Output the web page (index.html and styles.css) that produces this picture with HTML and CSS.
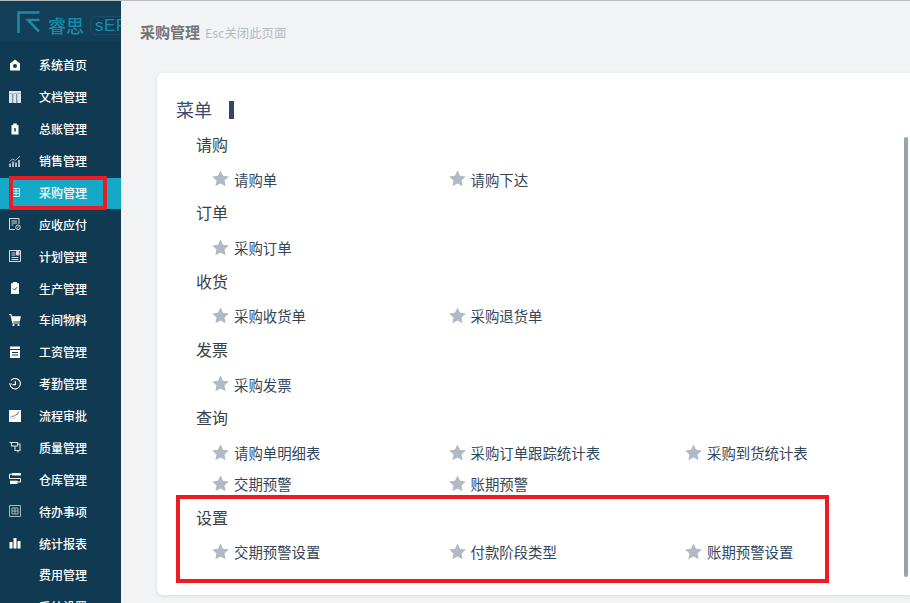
FILE: index.html
```html
<!DOCTYPE html>
<html lang="zh-CN">
<head>
<meta charset="utf-8">
<title>采购管理</title>
<link rel="stylesheet" href="styles.css">
</head>
<body>
<svg class="defs" width="0" height="0" aria-hidden="true">
  <symbol id="star" viewBox="0 0 16 16"><path d="M8 .4l2.400 5 5.400.7-4 3.800 1 5.500L8 12.800l-4.800 2.600 1-5.500-4-3.800 5.400-.7z"/></symbol>
</svg>
<div class="app">
  <aside class="sidebar">
    <div class="brand">
      <svg class="brand-logo" viewBox="0 0 23 22" fill="none" stroke="#1b8aa8" stroke-width="2.600">
        <path d="M1.500 22V1.500H22.500"/><path d="M22.500 9H11L22 20.500"/>
      </svg>
      <span class="brand-name">睿思</span>
      <span class="brand-tag">sERP</span>
    </div>
    <nav class="menu">
      <a class="menu-item"><svg class="ico" viewBox="0 0 12 12" fill="#fff"><path d="M6 .5L11 4.500V11.500H1V4.500z"/><circle cx="6" cy="7" r="2" fill="#0f3a52"/></svg><span>系统首页</span></a>
      <a class="menu-item"><svg class="ico" viewBox="0 0 12 12" fill="#dfe6ea"><path d="M0 0h12v12H0z"/><path d="M3.700 3v9M7.700 3v9" stroke="#6d8796" stroke-width="1.200"/><path d="M0 2.500h12" stroke="#8ea3af" stroke-width=".6"/></svg><span>文档管理</span></a>
      <a class="menu-item"><svg class="ico" viewBox="0 0 12 12" fill="#fff"><path d="M4.200 .5h3.600v1.500h1.700V11.500h-7V2h1.700z"/><path d="M5 5h2v3.500H5z" fill="#52707f"/></svg><span>总账管理</span></a>
      <a class="menu-item"><svg class="ico" viewBox="0 0 12 12" fill="#a9b8c2"><path d="M0 8.500h2V12H0zM3 6.500h2V12H3zM6 7.500h2V12H6zM9 5h2v7H9z"/><path d="M.5 6.500L3.500 4l3 1.500L11 1" fill="none" stroke="#a9b8c2"/></svg><span>销售管理</span></a>
      <a class="menu-item is-active"><svg class="ico" viewBox="0 0 12 12" fill="none" stroke="#cdeaf2"><path d="M1.500 2.500h9v8h-9zM1.500 5h9M1.500 7.500h9M7 2.500v8"/></svg><span>采购管理</span></a>
      <a class="menu-item"><svg class="ico" viewBox="0 0 12 12" fill="none" stroke="#d7dfe4"><path d="M10 6V.5H.5v11H6M2.500 3h5.500M2.500 5h5.500M2.500 7h2"/><circle cx="9" cy="9.300" r="2.300"/><path d="M9.800 8.500L8.300 10"/></svg><span>应收应付</span></a>
      <a class="menu-item"><svg class="ico" viewBox="0 0 12 12" fill="none" stroke="#d7dfe4"><path d="M.5.500h11v11H.5zM2.500 3h4M2.500 5h4M2.500 7.500h7M2.500 9.500h7"/><path d="M7.500 1.500h2.500v3.500H7.500z" fill="#d7dfe4"/></svg><span>计划管理</span></a>
      <a class="menu-item"><svg class="ico" viewBox="0 0 12 12" fill="#fff"><path d="M4 0h4v1.200h2V12H2V1.200h2z"/><path d="M4 6.500l1.500 1.500L8 5.300" fill="none" stroke="#0f3a52"/></svg><span>生产管理</span></a>
      <a class="menu-item"><svg class="ico" viewBox="0 0 12 12" fill="#fff"><path d="M0 0h2.200l1 2.300H12L10.700 7.500H4.300L4.500 8.500h6.200v1H3.300L1.500 1H0z"/><circle cx="4.500" cy="11" r="1.100"/><circle cx="9.500" cy="11" r="1.100"/></svg><span>车间物料</span></a>
      <a class="menu-item"><svg class="ico" viewBox="0 0 12 12" fill="#fff"><path d="M1 .5h10v2.500H1zM1 4h10v8H1z"/><path d="M3 6.500h6M3 9h6" stroke="#0f3a52"/></svg><span>工资管理</span></a>
      <a class="menu-item"><svg class="ico" viewBox="0 0 12 12" fill="none" stroke="#fff"><path d="M2 2.500A5.200 5.200 0 1 1 1 6.500" stroke-width="1.100"/><path d="M6.300 3v3.700H3.500M0 6h3" stroke-width="1.200"/></svg><span>考勤管理</span></a>
      <a class="menu-item"><svg class="ico" viewBox="0 0 12 12"><path d="M0 0h12v12H0z" fill="#fff"/><path d="M1 6.500l5-1.500 5-4.500-2 4-5 2.500z" fill="#8a979e"/><path d="M1 8h6" stroke="#c9ced1"/></svg><span>流程审批</span></a>
      <a class="menu-item"><svg class="ico" viewBox="0 0 12 12" fill="none" stroke="#d7dfe4" stroke-width="1.100"><path d="M.5 1.500h8v3.500h-6V1.500M6 5.500v4h5V3H8.500M9 9.500v2"/></svg><span>质量管理</span></a>
      <a class="menu-item"><svg class="ico" viewBox="0 0 12 12" fill="#fff"><path d="M3 0h9v2.500H3z"/><path d="M3 1.200H.5v4.300h11V9H8" fill="none" stroke="#fff"/><path d="M1 7.700h7.500V11H1z"/></svg><span>仓库管理</span></a>
      <a class="menu-item"><svg class="ico" viewBox="0 0 12 12" fill="none" stroke="#a9b8c2"><path d="M.5.500h11v11H.5zM3 3h6v6H3zM3 6h6M6 3v6"/></svg><span>待办事项</span></a>
      <a class="menu-item"><svg class="ico" viewBox="0 0 12 12" fill="#fff"><path d="M.5 5h3v6.500h-3zM4.500 1h3v10.500h-3zM8.500 4h3v7.500h-3z"/></svg><span>统计报表</span></a>
      <a class="menu-item"><span class="ico"></span><span>费用管理</span></a>
      <a class="menu-item"><span class="ico"></span><span>系统设置</span></a>
    </nav>
  </aside>
  <main class="content">
    <header class="page-head">
      <span class="page-title">采购管理</span>
      <span class="page-hint">Esc关闭此页面</span>
    </header>
    <section class="card">
      <div class="card-title"><span>菜单</span><i class="title-bar"></i></div>

      <div class="group">
        <h3 class="group-name">请购</h3>
        <ul class="links">
          <li><svg class="star"><use href="#star"/></svg>请购单</li>
          <li><svg class="star"><use href="#star"/></svg>请购下达</li>
        </ul>
      </div>
      <div class="group">
        <h3 class="group-name">订单</h3>
        <ul class="links">
          <li><svg class="star"><use href="#star"/></svg>采购订单</li>
        </ul>
      </div>
      <div class="group">
        <h3 class="group-name">收货</h3>
        <ul class="links">
          <li><svg class="star"><use href="#star"/></svg>采购收货单</li>
          <li><svg class="star"><use href="#star"/></svg>采购退货单</li>
        </ul>
      </div>
      <div class="group">
        <h3 class="group-name">发票</h3>
        <ul class="links">
          <li><svg class="star"><use href="#star"/></svg>采购发票</li>
        </ul>
      </div>
      <div class="group">
        <h3 class="group-name">查询</h3>
        <ul class="links">
          <li><svg class="star"><use href="#star"/></svg>请购单明细表</li>
          <li><svg class="star"><use href="#star"/></svg>采购订单跟踪统计表</li>
          <li><svg class="star"><use href="#star"/></svg>采购到货统计表</li>
          <li><svg class="star"><use href="#star"/></svg>交期预警</li>
          <li><svg class="star"><use href="#star"/></svg>账期预警</li>
        </ul>
      </div>
      <div class="group">
        <h3 class="group-name">设置</h3>
        <ul class="links">
          <li><svg class="star"><use href="#star"/></svg>交期预警设置</li>
          <li><svg class="star"><use href="#star"/></svg>付款阶段类型</li>
          <li><svg class="star"><use href="#star"/></svg>账期预警设置</li>
        </ul>
      </div>
      <div class="scrollbar"></div>
    </section>
  </main>
</div>
<div class="mark mark-menu"></div>
<div class="mark mark-settings"></div>
</body>
</html>
```
FILE: styles.css
```css
* { box-sizing: border-box; }
html, body { margin: 0; height: 100%; overflow: hidden; }
body {
  font-family: "Noto Sans CJK SC", "Liberation Sans", sans-serif;
  background: #f1f3f5;
  border-top: 1px solid #b9bcbe;
}
.defs { position: absolute; }
.app { display: flex; height: 602px; overflow: hidden; }

.sidebar {
  width: 121px;
  flex: none;
  background: #0f3a52;
  overflow: hidden;
  color: #fff;
}
.brand {
  height: 40px;
  display: flex;
  align-items: flex-start;
  padding: 10px 0 0 17px;
  background: #123e57;
  white-space: nowrap;
  overflow: hidden;
}
.brand-logo { width: 23px; height: 22px; flex: none; }
.brand-name { font-size: 18px; line-height: 28px; color: #1b8aa8; margin-left: 8px; font-weight: 500; }
.brand-tag {
  font-family: "Liberation Sans", sans-serif;
  font-size: 17px;
  line-height: 17px;
  color: #1b8aa8;
  margin: 5px 0 0 6px;
  padding-left: 4px;
  letter-spacing: .5px;
  border: 1px solid #1a4c66;
  border-radius: 5px;
}
.menu { display: flex; flex-direction: column; padding-top: 9px; }
.menu-item {
  height: 31.88px;
  flex: none;
  display: flex;
  align-items: center;
  padding: 0 0 2px 9px;
  font-size: 12px;
  font-weight: 500;
  color: #fff;
}
.menu-item.is-active { background: #13a9c7; }
.ico { width: 12px; height: 12px; flex: none; margin-right: 18px; display: block; }

.content { flex: 1; min-width: 0; padding-left: 19px; }
.page-head {
  height: 72px;
  padding-top: 20px;
  display: flex;
  align-items: baseline;
  white-space: nowrap;
}
.page-title { font-size: 15px; line-height: 22px; font-weight: 700; color: #737577; }
.page-hint { font-size: 12.400px; color: #b6bbc0; margin-left: 5px; }

.card {
  position: relative;
  margin-left: 17px;
  height: 522px;
  background: #fff;
  border-radius: 6px 0 0 6px;
  box-shadow: 0 1px 4px rgba(0, 0, 0, .1);
  padding: 23px 0 0 19px;
}
.card-title {
  display: flex;
  align-items: center;
  height: 26px;
  font-size: 18px;
  color: #3d4a70;
}
.title-bar { width: 5px; height: 18px; background: #34446f; margin: 1px 0 0 17px; }
.group { padding-left: 20px; }
.card-title + .group { margin-top: 7px; }
.group-name {
  margin: 0;
  height: 32px;
  font-size: 16px;
  line-height: 30px;
  font-weight: 400;
  color: #3a3f44;
}
.links {
  list-style: none;
  margin: 0;
  padding: 0 0 5.330px 16.500px;
  display: grid;
  grid-template-columns: repeat(3, 236.500px);
  grid-auto-rows: 31px;
}
.links li {
  height: 36px;
  padding-top: 3.700px;
  display: flex;
  align-items: flex-start;
  font-size: 14.400px;
  line-height: 30px;
  color: #33475a;
}
.star { width: 17px; height: 17px; fill: #b0bac5; margin: 5.500px 5px 0 -.5px; flex: none; }

.scrollbar {
  position: absolute;
  right: 2px;
  top: 64px;
  width: 4px;
  height: 440px;
  border-radius: 2px;
  background: #93a3af;
}
.mark { position: absolute; border: 4px solid #ed1c24; }
.mark-menu { left: 9px; top: 176px; width: 98px; height: 34px; }
.mark-settings { left: 176px; top: 495px; width: 653px; height: 88px; }
```
